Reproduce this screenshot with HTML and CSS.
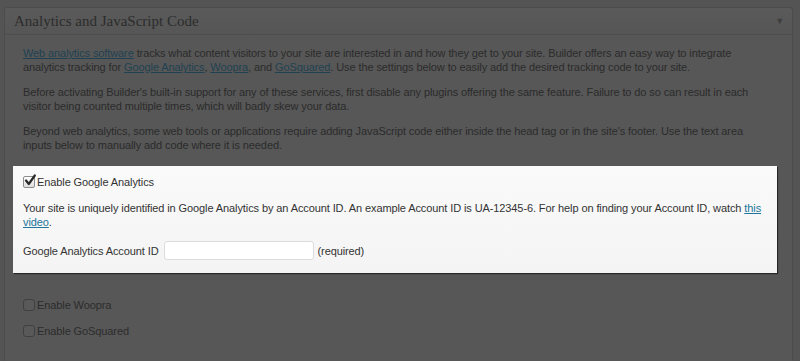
FILE: index.html
```html
<!DOCTYPE html>
<html lang="en">
<head>
<meta charset="utf-8">
<title>Analytics and JavaScript Code</title>
<link rel="stylesheet" href="styles.css">
</head>
<body>
<div class="postbox">
  <div class="postbox-head">
    <h3>Analytics and JavaScript Code</h3>
    <span class="toggle">&#9660;</span>
  </div>
  <div class="inside">
    <p><a href="#">Web analytics software</a> tracks what content visitors to your site are interested in and how they get to your site. Builder offers an easy way to integrate analytics tracking for <a href="#">Google Analytics</a>, <a href="#">Woopra</a>, and <a href="#">GoSquared</a>. Use the settings below to easily add the desired tracking code to your site.</p>
    <p>Before activating Builder's built-in support for any of these services, first disable any plugins offering the same feature. Failure to do so can result in each visitor being counted multiple times, which will badly skew your data.</p>
    <p>Beyond web analytics, some web tools or applications require adding JavaScript code either inside the head tag or in the site's footer. Use the text area inputs below to manually add code where it is needed.</p>

    <div class="highlight">
      <label class="check-row">
        <span class="cb cb-checked">
          <svg width="14" height="14" viewBox="0 0 14 14"><path d="M3 6.5 L5.8 10 L11.8 1.5" fill="none" stroke="#2a2a2a" stroke-width="2.2" stroke-linecap="round" stroke-linejoin="round"/></svg>
        </span>
        Enable Google Analytics
      </label>
      <p class="hl-text">Your site is uniquely identified in Google Analytics by an Account ID. An example Account ID is UA-12345-6. For help on finding your Account ID, watch <a href="#">this video</a>.</p>
      <div class="field-row">
        <label class="field-label">Google Analytics Account ID</label>
        <input class="text-input" type="text">
        <span class="req">(required)</span>
      </div>
    </div>

    <label class="check-row dim first">
      <span class="cb"></span>
      Enable Woopra
    </label>
    <label class="check-row dim">
      <span class="cb"></span>
      Enable GoSquared
    </label>
  </div>
</div>
</body>
</html>
```

FILE: styles.css
```css
html, body {
  margin: 0;
  padding: 0;
  overflow: hidden;
}

body {
  background: #545454;
  font-family: "Liberation Sans", Arial, sans-serif;
  font-size: 11px;
  letter-spacing: -0.1px;
  line-height: 14px;
  color: #2b2b2b;
  height: 361px;
}

.postbox {
  box-sizing: border-box;
  margin: 7px 7px 0 4px;
  border: 1px solid #4c4c4c;
  border-bottom: none;
  border-radius: 3px 3px 0 0;
  background: #575757;
  height: 354px;
}

.postbox-head {
  display: flex;
  align-items: center;
  justify-content: space-between;
  height: 26px;
  border-bottom: 1px solid #4d4d4d;
  background: linear-gradient(#5a5a5a, #565656);
  padding: 0 10px 0 9px;
  border-radius: 3px 3px 0 0;
}

.postbox-head h3 {
  margin: 0;
  font-family: "Liberation Serif", "Times New Roman", serif;
  font-weight: normal;
  font-size: 15px;
  letter-spacing: 0;
  line-height: 26px;
  color: #2c2c2c;
}

.toggle {
  font-size: 9px;
  color: #3e3e3e;
  line-height: 26px;
  margin-right: -2px;
}

.inside {
  padding: 11px 25px 0 18px;
}

.inside p {
  margin: 0 0 11px;
}

a {
  color: #1f4252;
  text-decoration: underline;
}

.highlight {
  margin: 14px -10px 0 -10px;
  padding: 9px 10px 13px 10px;
  background: linear-gradient(#fafafa, #f4f4f4);
  color: #333;
  box-shadow: 1px 1px 1px rgba(0, 0, 0, 0.55);
}

.highlight a {
  color: #21759b;
}

.check-row {
  display: flex;
  align-items: center;
  height: 14px;
}

.cb {
  box-sizing: border-box;
  width: 12px;
  height: 12px;
  margin-right: 2px;
  border: 1px solid #404040;
  border-radius: 3px;
  background: #595959;
  position: relative;
}

.cb-checked {
  border-color: #8d8d8d;
  background: linear-gradient(#ffffff, #dedede);
  border-radius: 2px;
}

.cb-checked svg {
  position: absolute;
  left: -1px;
  top: -3px;
}

.highlight .hl-text {
  margin: 12px 0 12px;
}

.field-row {
  display: flex;
  align-items: center;
  height: 19px;
}

.field-label {
  margin-right: 5px;
}

.text-input {
  box-sizing: border-box;
  width: 150px;
  height: 19px;
  border: 1px solid #dcdcdc;
  border-radius: 3px;
  background: #fff;
  margin: 0 4px 0 0;
  padding: 0 4px;
  font: inherit;
}

.req {
  color: #333;
}

.check-row.dim {
  color: #2c2c2c;
  margin-top: 12px;
}

.check-row.dim.first {
  margin-top: 25px;
}
```
